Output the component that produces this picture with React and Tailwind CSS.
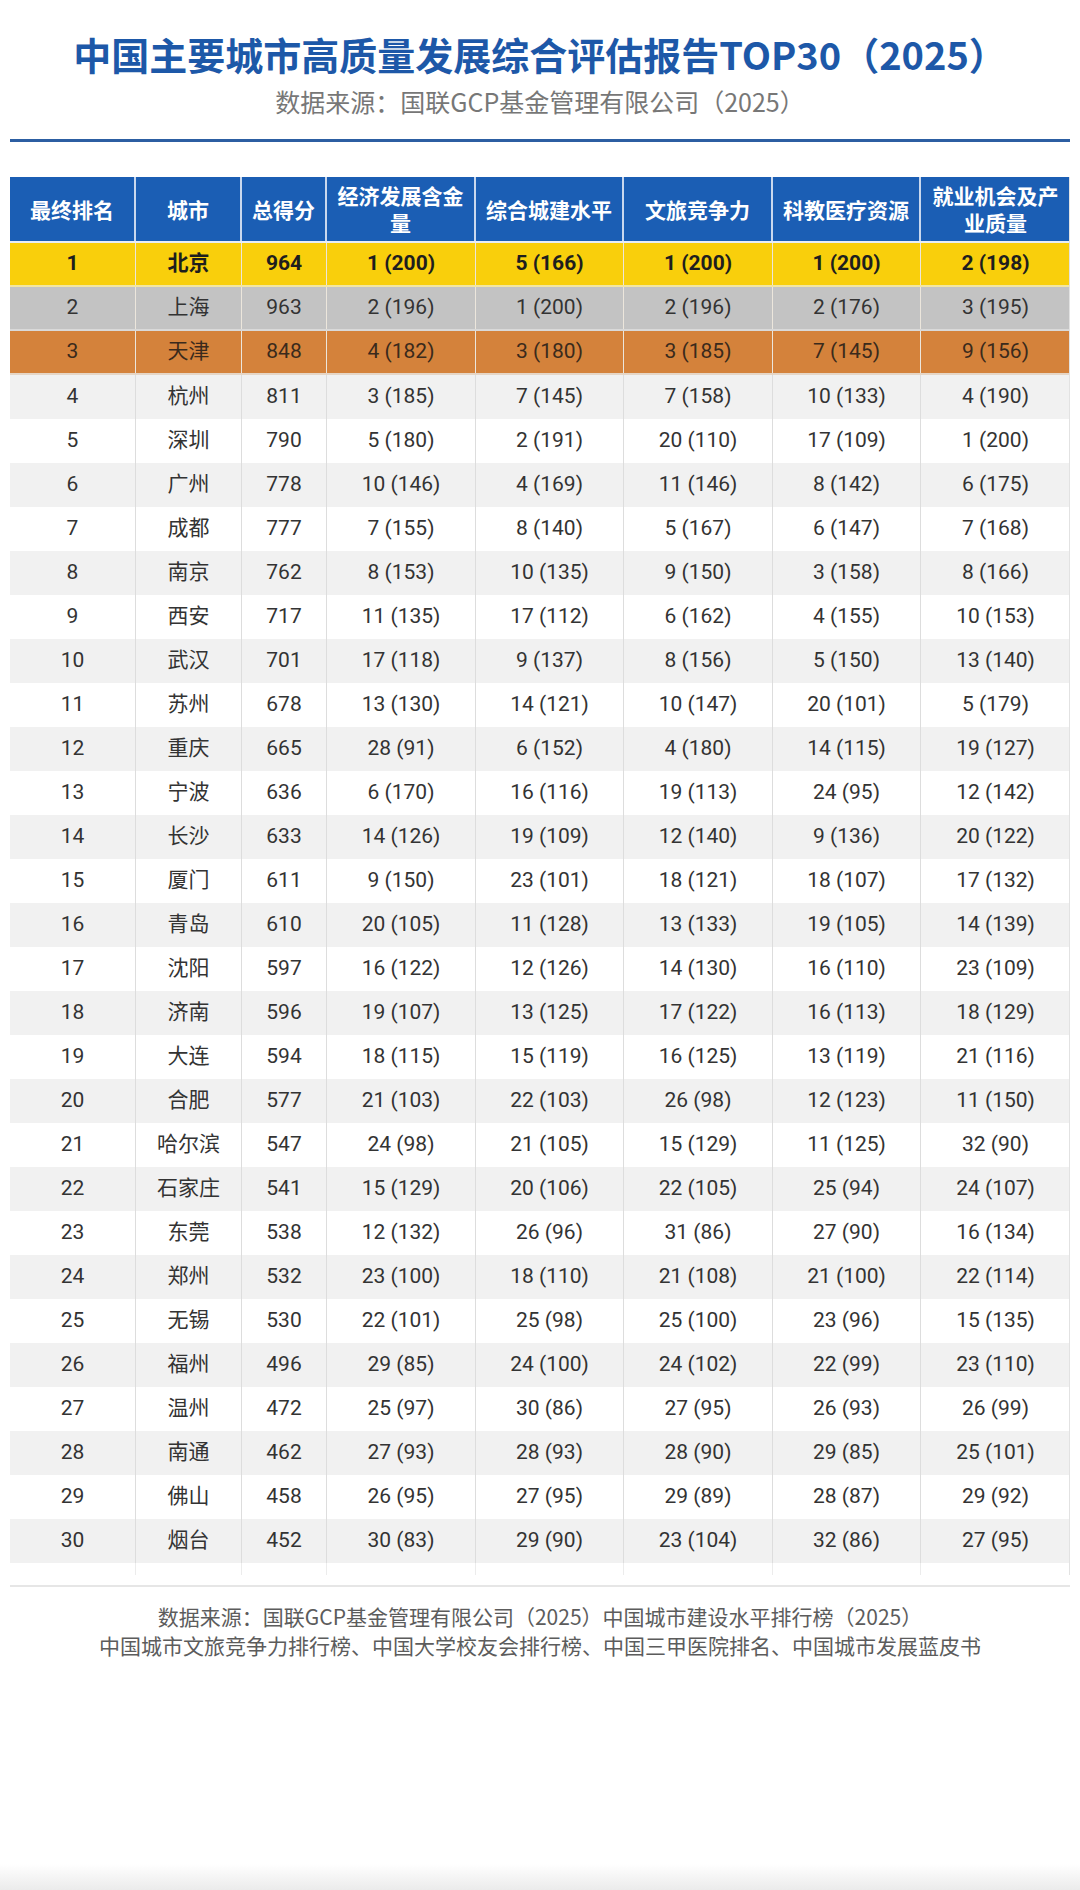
const headers = [
  "最终排名",
  "城市",
  "总得分",
  "经济发展含金量",
  "综合城建水平",
  "文旅竞争力",
  "科教医疗资源",
  "就业机会及产业质量",
];

const rows = [
  ["北京", 964, "1 (200)", "5 (166)", "1 (200)", "1 (200)", "2 (198)"],
  ["上海", 963, "2 (196)", "1 (200)", "2 (196)", "2 (176)", "3 (195)"],
  ["天津", 848, "4 (182)", "3 (180)", "3 (185)", "7 (145)", "9 (156)"],
  ["杭州", 811, "3 (185)", "7 (145)", "7 (158)", "10 (133)", "4 (190)"],
  ["深圳", 790, "5 (180)", "2 (191)", "20 (110)", "17 (109)", "1 (200)"],
  ["广州", 778, "10 (146)", "4 (169)", "11 (146)", "8 (142)", "6 (175)"],
  ["成都", 777, "7 (155)", "8 (140)", "5 (167)", "6 (147)", "7 (168)"],
  ["南京", 762, "8 (153)", "10 (135)", "9 (150)", "3 (158)", "8 (166)"],
  ["西安", 717, "11 (135)", "17 (112)", "6 (162)", "4 (155)", "10 (153)"],
  ["武汉", 701, "17 (118)", "9 (137)", "8 (156)", "5 (150)", "13 (140)"],
  ["苏州", 678, "13 (130)", "14 (121)", "10 (147)", "20 (101)", "5 (179)"],
  ["重庆", 665, "28 (91)", "6 (152)", "4 (180)", "14 (115)", "19 (127)"],
  ["宁波", 636, "6 (170)", "16 (116)", "19 (113)", "24 (95)", "12 (142)"],
  ["长沙", 633, "14 (126)", "19 (109)", "12 (140)", "9 (136)", "20 (122)"],
  ["厦门", 611, "9 (150)", "23 (101)", "18 (121)", "18 (107)", "17 (132)"],
  ["青岛", 610, "20 (105)", "11 (128)", "13 (133)", "19 (105)", "14 (139)"],
  ["沈阳", 597, "16 (122)", "12 (126)", "14 (130)", "16 (110)", "23 (109)"],
  ["济南", 596, "19 (107)", "13 (125)", "17 (122)", "16 (113)", "18 (129)"],
  ["大连", 594, "18 (115)", "15 (119)", "16 (125)", "13 (119)", "21 (116)"],
  ["合肥", 577, "21 (103)", "22 (103)", "26 (98)", "12 (123)", "11 (150)"],
  ["哈尔滨", 547, "24 (98)", "21 (105)", "15 (129)", "11 (125)", "32 (90)"],
  ["石家庄", 541, "15 (129)", "20 (106)", "22 (105)", "25 (94)", "24 (107)"],
  ["东莞", 538, "12 (132)", "26 (96)", "31 (86)", "27 (90)", "16 (134)"],
  ["郑州", 532, "23 (100)", "18 (110)", "21 (108)", "21 (100)", "22 (114)"],
  ["无锡", 530, "22 (101)", "25 (98)", "25 (100)", "23 (96)", "15 (135)"],
  ["福州", 496, "29 (85)", "24 (100)", "24 (102)", "22 (99)", "23 (110)"],
  ["温州", 472, "25 (97)", "30 (86)", "27 (95)", "26 (93)", "26 (99)"],
  ["南通", 462, "27 (93)", "28 (93)", "28 (90)", "29 (85)", "25 (101)"],
  ["佛山", 458, "26 (95)", "27 (95)", "29 (89)", "28 (87)", "29 (92)"],
  ["烟台", 452, "30 (83)", "29 (90)", "23 (104)", "32 (86)", "27 (95)"],
];

const grid =
  "grid grid-cols-[126px_106px_85px_149px_148px_149px_148px_149px]";

// top three get medal colours, the rest alternate white / light gray
const rowStyle = (i) => {
  if (i === 0) return "bg-[#f9cf0c] font-bold text-[#1e1e1e] border-b-2 border-[#f3e6a0]";
  if (i === 1) return "bg-[#c3c3c3] text-[#333] border-b-2 border-[#d9d9d9]";
  if (i === 2) return "bg-[#d4823b] text-[#3a2a1c] border-b-2 border-[#e6d6c6]";
  return i % 2 === 1 ? "bg-[#f1f1f1] text-[#333]" : "bg-white text-[#333]";
};

const divider = (i) => (i < 3 ? "border-[#ece6dc]" : "border-[#dddddd]");

export default function App() {
  return (
    <div className="w-[1080px] h-[1890px] bg-white flex flex-col font-[Roboto,'Noto_Sans_CJK_SC',sans-serif]">
      <h1 className="mt-[33px] text-center text-[38px] leading-[42px] font-bold text-[#1d58a8] font-['Noto_Sans_CJK_SC',sans-serif]">
        中国主要城市高质量发展综合评估报告TOP30（2025）
      </h1>
      <p className="mt-[11px] text-center text-[25px] leading-[30px] text-[#777] font-['Noto_Sans_CJK_SC',sans-serif]">
        数据来源：国联GCP基金管理有限公司（2025）
      </p>
      <div className="mt-[23px] mx-[10px] h-[3px] bg-[#2c5ea2]" />

      <div className="mt-[35px] mx-[10px] border-r border-[#e2e2e2]">
        <div className={`${grid} h-[66px] bg-[#1b5eb4] text-white font-bold text-[21px] leading-[27px] border-b-2 border-[#e8eef7] font-['Noto_Sans_CJK_SC',sans-serif]`}>
          {headers.map((h, k) => (
            <div
              key={h}
              className={`flex items-center justify-center text-center px-[10px] ${k < 7 ? "border-r-2 border-[#c9d8ee]" : ""}`}
            >
              {h}
            </div>
          ))}
        </div>

        {rows.map((r, i) => {
          const cells = [i + 1, ...r];
          return (
            <div key={i} className={`${grid} h-[44px] text-[21px] ${rowStyle(i)}`}>
              {cells.map((c, k) => (
                <div
                  key={k}
                  className={`flex items-center justify-center ${k < 7 ? `border-r ${divider(i)}` : ""}`}
                >
                  {c}
                </div>
              ))}
            </div>
          );
        })}

        <div className={`${grid} h-[12px] bg-white`}>
          {headers.map((h, k) => (
            <div key={h} className={k < 7 ? "border-r border-[#ececec]" : ""} />
          ))}
        </div>
      </div>

      <div className="mt-[10px] mx-[10px] h-[2px] bg-[#e6e6e6]" />

      <div className="mt-[15px] text-center text-[21px] leading-[29px] text-[#5c5c5c] font-['Noto_Sans_CJK_SC',sans-serif]">
        <p>数据来源：国联GCP基金管理有限公司（2025）中国城市建设水平排行榜（2025）</p>
        <p>中国城市文旅竞争力排行榜、中国大学校友会排行榜、中国三甲医院排名、中国城市发展蓝皮书</p>
      </div>

      <div className="mt-auto h-[26px] bg-gradient-to-b from-white to-[#ebebeb]" />
    </div>
  );
}
